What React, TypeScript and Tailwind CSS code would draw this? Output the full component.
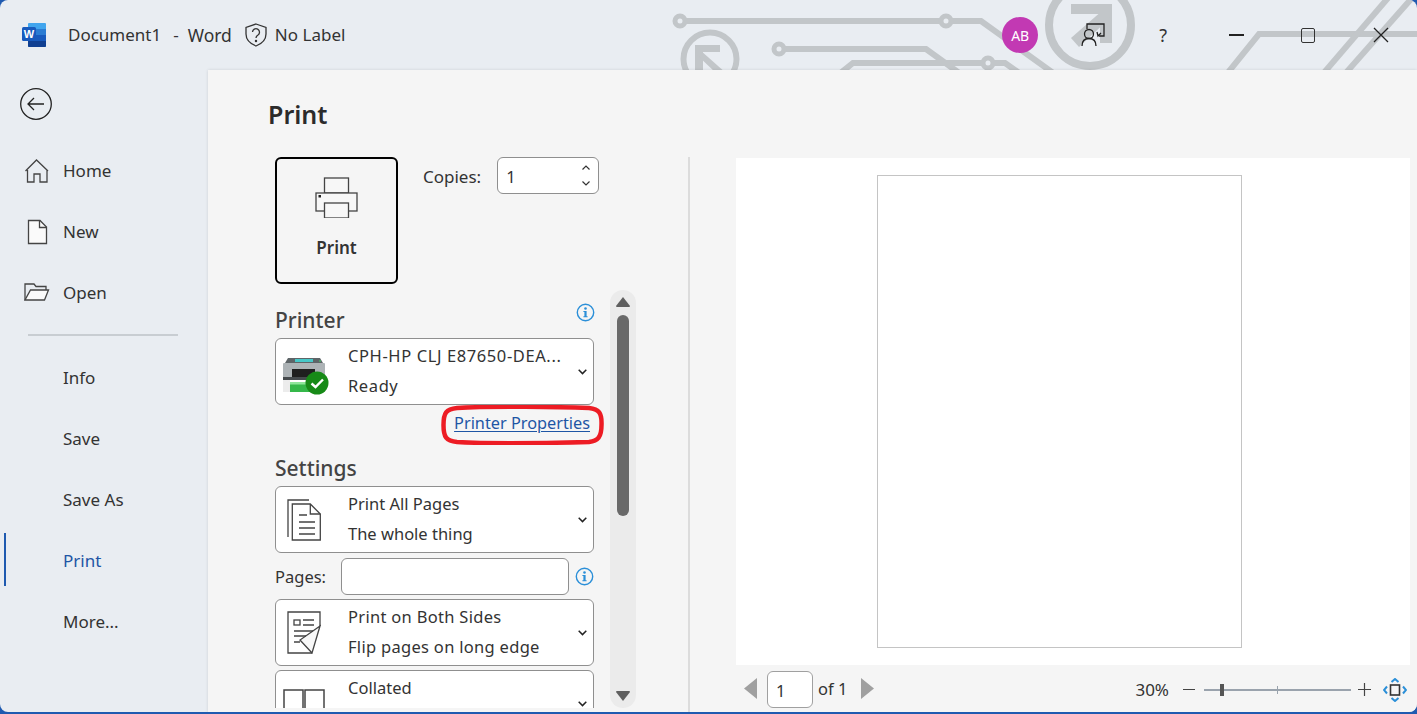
import type { ReactNode } from "react";

function Circuit() {
  return (
    <svg className="absolute left-0 top-0" width="1417" height="71" fill="none" stroke="#c2c6c9" strokeWidth="6">
      <path d="M680 21H981L1056 75" />
      <path d="M779 49H926L962 75" />
      <path d="M838 75L853 63H1005L1022 75" />
      <path d="M1226 75L1259 34H1417" />
      <path d="M1322 75L1388 -2" />
      <path d="M1344 75L1412 -2" />
      <circle cx="1090" cy="25" r="41" strokeWidth="8" />
      <path d="M1071 4H1112V43H1100V14H1071Z" fill="#c2c6c9" stroke="none" />
      <path d="M1103 10L1110 18L1079 47L1071 38Z" fill="#c2c6c9" stroke="none" />
      <circle cx="710" cy="59" r="26.5" />
      <path d="M695 45H720V52H703V70H695Z" fill="#c2c6c9" stroke="none" />
      <path d="M700 50L726 73H716L696 54Z" fill="#c2c6c9" stroke="none" />
      <g fill="#e9edf2" strokeWidth="5">
        <circle cx="680" cy="21" r="5" />
        <circle cx="946" cy="21" r="5" />
        <circle cx="779" cy="49" r="5" />
        <circle cx="988" cy="63" r="5" />
      </g>
    </svg>
  );
}

function WordLogo() {
  return (
    <svg width="24" height="24" viewBox="0 0 24 24">
      <rect x="6" width="18" height="24" rx="1" fill="#41a5ee" />
      <rect x="6" y="6" width="18" height="6" fill="#2b7cd3" />
      <rect x="6" y="12" width="18" height="6" fill="#185abd" />
      <path d="M6 18H24V23a1 1 0 0 1-1 1H7a1 1 0 0 1-1-1Z" fill="#103f91" />
      <rect y="4" width="14" height="14" rx="1.5" fill="#185abd" />
      <text x="7" y="15" textAnchor="middle" fontSize="11" fontWeight="700" fill="#fff" fontFamily="Liberation Sans">W</text>
    </svg>
  );
}

function Chevron() {
  return (
    <svg width="9" height="6" viewBox="0 0 9 6" fill="none" stroke="#222" strokeWidth="1.5">
      <path d="M.7.8L4.5 4.6 8.3.8" />
    </svg>
  );
}

function InfoIcon() {
  return (
    <svg width="19" height="19" viewBox="0 0 19 19">
      <circle cx="9.5" cy="9.5" r="8.2" fill="none" stroke="#2b8fd8" strokeWidth="1.4" />
      <rect x="8.4" y="8" width="2.2" height="6" fill="#2b8fd8" />
      <path d="M7.4 8H9v1H7.4ZM7.4 13.2h4.2v1H7.4Z" fill="#2b8fd8" />
      <circle cx="9.5" cy="5.5" r="1.3" fill="#2b8fd8" />
    </svg>
  );
}

function PrinterColor() {
  return (
    <svg className="ml-[4px] mt-[9px]" width="46" height="38" viewBox="0 0 46 38">
      <path d="M2 6L5 1H37L40 6Z" fill="#5e6568" />
      <rect x="12" y="2" width="18" height="3" fill="#47c8c8" />
      <circle cx="37" cy="4" r="0.8" fill="#3ee06a" />
      <rect y="6" width="42" height="15" rx="1" fill="#adb3b6" />
      <rect x="9" y="12" width="23" height="8" fill="#1f1f1f" />
      <rect y="20" width="42" height="3" fill="#454a4d" />
      <rect y="23" width="7" height="12" fill="#ececec" />
      <rect x="7" y="25" width="21" height="10" fill="#35b84a" />
      <rect x="7" y="25" width="21" height="2.5" fill="#8fe69b" />
      <circle cx="34" cy="26" r="11.5" fill="#178a17" />
      <path d="M28.5 26.5L32.5 30 40 22.5" fill="none" stroke="#fff" strokeWidth="2.4" />
    </svg>
  );
}

function PagesIcon() {
  return (
    <svg width="34" height="42" viewBox="0 0 34 42" fill="none" stroke="#444" strokeWidth="1.3">
      <path d="M1 38V1H22" />
      <path d="M6 5H24L34 15V41H6Z" transform="translate(-.7 0)" />
      <path d="M23.3 5V15H33.3" />
      <path d="M12 16H20M12 23H28M12 29H28M12 35H28" />
    </svg>
  );
}

function BothSidesIcon() {
  return (
    <svg width="34" height="43" viewBox="0 0 34 43" fill="none" stroke="#444" strokeWidth="1.3">
      <path d="M33 15V1H1V42H25" />
      <path d="M33 15L13 29 25 42Z" fill="#f8f8f8" />
      <rect x="7" y="9" width="6" height="5" />
      <path d="M16 9H27M16 14H27M7 20H26M7 25H19M7 31H13" />
    </svg>
  );
}

function CollatedIcon() {
  return (
    <svg width="42" height="30" viewBox="0 0 42 30" fill="#fff" stroke="#444" strokeWidth="1.5">
      <rect x="1" y="1" width="19" height="28" />
      <rect x="22" y="1" width="19" height="28" />
    </svg>
  );
}

function NavIcon({ name }: { name: string }) {
  if (name === "Home") {
    return (
      <svg width="26" height="26" viewBox="0 0 26 26" fill="none" stroke="#444" strokeWidth="1.3">
        <path d="M1.5 13L12.5 2 24 13M3.5 12V24H10V16H16V24H23V12" />
      </svg>
    );
  }
  if (name === "New") {
    return (
      <svg width="26" height="26" viewBox="0 0 26 26" fill="#fafafa" stroke="#444" strokeWidth="1.3">
        <path d="M4.5 1.5H16L22.5 8V24.5H4.5Z" />
        <path d="M15.5 1.5V8.5H22.5" fill="none" />
      </svg>
    );
  }
  if (name === "Open") {
    return (
      <svg width="26" height="26" viewBox="0 0 26 26" fill="none" stroke="#444" strokeWidth="1.3">
        <path d="M1 20V4H10L12 6.5H22V10" />
        <path d="M1 20H20.5L24.5 10H6.5Z" fill="#fafafa" />
      </svg>
    );
  }
  return <span className="block w-[26px]" />;
}

function NavItem({ name, active }: { name: string; active?: boolean }) {
  return (
    <div className="relative flex h-[61px] items-center gap-[14px] pl-[24px] text-[17px]">
      {active && <div className="absolute left-[4px] top-[3px] h-[53px] w-[2px] bg-[#1f5ab0]" />}
      <span className="w-[25px] shrink-0">
        <NavIcon name={name} />
      </span>
      <span className={active ? "text-[#1e55a5]" : ""}>{name}</span>
    </div>
  );
}

function Dropdown({ icon, line1, line2, track }: { icon: ReactNode; line1: string; line2?: string; track?: string }) {
  return (
    <div className="flex h-[67px] w-[319px] shrink-0 items-center rounded-[6px] border border-[#8f8f8f] bg-white">
      <div className="flex w-[72px] shrink-0 pr-[16px]">
        <div className="flex w-[56px] justify-center">{icon}</div>
      </div>
      <div className={`flex-1 pb-[1px] leading-[30.5px] ${track ?? ""}`}>
        <div>{line1}</div>
        <div>{line2 ?? "\u00a0"}</div>
      </div>
      <div className="pr-[6px]">
        <Chevron />
      </div>
    </div>
  );
}

export default function App() {
  return (
    <div className="h-[714px] w-[1417px] overflow-hidden bg-[#1f5ab0] font-['Noto_Sans',sans-serif] text-[16.5px] text-[#333]">
      <div className="relative flex h-[712px] flex-col overflow-hidden rounded-[8px] bg-[#e9edf2]">
        <Circuit />
        <header className="relative flex h-[70px] shrink-0 items-center pl-[22px] text-[17px]">
          <WordLogo />
          <span className="ml-[22px]">Document1</span>
          <span className="ml-[12px]">-</span>
          <span className="ml-[9px] text-[17.5px]">Word</span>
          <svg className="ml-[13px]" width="22" height="24" viewBox="0 0 22 24" fill="none" stroke="#333" strokeWidth="1.3">
            <path d="M11 1L21 4.5V11C21 17 16 21 11 23 6 21 1 17 1 11V4.5Z" />
            <path d="M7.5 9a3.5 3.5 0 1 1 5.5 3c-1.3.8-2 1.5-2 3" />
            <circle cx="11" cy="18" r=".6" />
          </svg>
          <span className="ml-[8px]">No Label</span>
          <div className="flex-1" />
          <div className="flex h-[36px] w-[36px] items-center justify-center rounded-full bg-[#c239b3] text-[14px] text-white">AB</div>
          <svg className="ml-[43px]" width="24" height="24" viewBox="0 0 24 24" fill="none" stroke="#222" strokeWidth="1.3">
            <path d="M6 6V1H23V13H18" />
            <circle cx="8" cy="11" r="4.5" />
            <path d="M1 23C1 18 4 15.5 8 15.5S15 18 15 23" />
            <path d="M16 9L17 13 20 10" />
          </svg>
          <span className="ml-[54px] text-[18px]">?</span>
          <div className="ml-[62px] h-[1.5px] w-[15px] bg-[#222]" />
          <div className="ml-[57px] h-[15px] w-[14px] rounded-[2px] border-[1.5px] border-[#333]" />
          <svg className="ml-[58px] mr-[28px]" width="16" height="16" viewBox="0 0 16 16" stroke="#222" strokeWidth="1.3">
            <path d="M1 1L15 15M15 1L1 15" />
          </svg>
        </header>

        <div className="relative flex min-h-0 flex-1">
          <nav className="w-[208px] shrink-0">
            <div className="flex h-[70px] items-center pb-[2px] pl-[20px]">
              <svg width="32" height="32" viewBox="0 0 32 32" fill="none" stroke="#222" strokeWidth="1.3">
                <circle cx="16" cy="16" r="15.3" />
                <path d="M24 16H8M14 10L8 16 14 22" />
              </svg>
            </div>
            <NavItem name="Home" />
            <NavItem name="New" />
            <NavItem name="Open" />
            <div className="mx-[28px] my-[11px] h-[2px] w-[150px] bg-[#c8cdd2]" />
            <NavItem name="Info" />
            <NavItem name="Save" />
            <NavItem name="Save As" />
            <NavItem name="Print" active />
            <NavItem name="More..." />
          </nav>

          <main className="flex min-w-0 flex-1 flex-col bg-[#f5f5f5] shadow-[0_0_3px_rgba(0,0,0,0.12)]">
            <div className="flex h-[87px] shrink-0 items-start pl-[60px] pt-[25px]">
              <h1 className="text-[25px] font-semibold leading-[39px] text-[#2b2b2b]">Print</h1>
            </div>
            <div className="flex min-h-0 flex-1">
              <div className="w-[482px] shrink-0 border-r-2 border-[#dcdcdc] pl-[67px]">
                <div className="flex h-[127px] items-start">
                  <button className="flex h-[127px] w-[123px] flex-col items-center rounded-[6px] border-2 border-black pt-[18px]">
                    <svg width="43" height="41" viewBox="0 0 43 41" fill="#f7f7f7" stroke="#444" strokeWidth="1.3">
                      <rect x="9.5" y="1" width="24" height="15" />
                      <rect x="1" y="16" width="41" height="18" />
                      <rect x="9.5" y="26" width="24" height="15" />
                      <rect x="3.5" y="18" width="2.5" height="2.5" fill="#222" stroke="none" />
                    </svg>
                    <span className="mt-[17px] text-[17px] font-semibold">Print</span>
                  </button>
                  <span className="ml-[25px] mt-[7px] text-[17px]">Copies:</span>
                  <div className="ml-[16px] flex h-[37px] w-[102px] items-center justify-between rounded-[6px] border border-[#8f8f8f] bg-white pl-[8px] pr-[8px]">
                    <span className="mt-[3px]">1</span>
                    <div className="flex flex-col gap-[11px]">
                      <svg width="8" height="5" viewBox="0 0 8 5" fill="none" stroke="#333" strokeWidth="1.2">
                        <path d="M.5 4.5L4 1 7.5 4.5" />
                      </svg>
                      <svg width="8" height="5" viewBox="0 0 8 5" fill="none" stroke="#333" strokeWidth="1.2">
                        <path d="M.5.5L4 4 7.5.5" />
                      </svg>
                    </div>
                  </div>
                </div>

                <div className="mt-[6px] flex h-[418px]">
                  <div className="h-full w-[335px] shrink-0 overflow-hidden">
                    <div className="relative flex h-[48px] w-[319px] items-end pb-[3px]">
                      <h2 className="text-[21px] font-medium leading-[30px] text-[#444]">Printer</h2>
                      <div className="absolute -right-px top-[13px]">
                        <InfoIcon />
                      </div>
                    </div>
                    <Dropdown icon={<PrinterColor />} line1="CPH-HP CLJ E87650-DEA..." line2="Ready" track="tracking-[0.6px]" />
                    <div className="flex h-[36px] w-[319px] items-center justify-end pr-[4px]">
                      <div className="relative">
                        <a className="text-[16.3px] text-[#1e55a5] underline underline-offset-2">Printer Properties</a>
                        <svg className="absolute -left-[13px] -top-[6px]" width="163" height="40" viewBox="0 0 163 40" fill="none" stroke="#ed1c24" strokeWidth="4.5">
                          <path d="M16 3C50 1 120 2 148 3 158 4 161 8 160.500 20 160.500 32 157 36 148 37 110 38 50 39 16 37 5 36 2.500 32 2.500 20 2.500 8 5 4 16 3Z" />
                        </svg>
                      </div>
                    </div>
                    <div className="flex h-[45px] items-end">
                      <h2 className="text-[21px] font-medium leading-[36px] text-[#444]">Settings</h2>
                    </div>
                    <Dropdown icon={<PagesIcon />} line1="Print All Pages" line2="The whole thing" />
                    <div className="mt-[5px] flex h-[37px] w-[319px] items-center">
                      <span className="mt-[1px] w-[66px]">Pages:</span>
                      <div className="h-[37px] w-[230px] rounded-[6px] border border-[#8f8f8f] bg-white" />
                      <div className="ml-[6px]">
                        <InfoIcon />
                      </div>
                    </div>
                    <div className="mt-[4px]">
                      <Dropdown icon={<BothSidesIcon />} line1="Print on Both Sides" line2="Flip pages on long edge" track="tracking-[0.3px]" />
                    </div>
                    <div className="mt-[4px]">
                      <Dropdown icon={<CollatedIcon />} line1="Collated" />
                    </div>
                  </div>
                  <div className="flex h-full w-[26px] flex-col items-center rounded-[13px] bg-[#ebebeb] pt-[7px]">
                    <svg width="14" height="10" viewBox="0 0 14 10" fill="#5f5f5f">
                      <path d="M7 0L14 9a1 1 0 0 1-1 1H1a1 1 0 0 1-1-1Z" />
                    </svg>
                    <div className="mt-[8px] h-[201px] w-[12px] rounded-[6px] bg-[#696969]" />
                    <div className="flex-1" />
                    <svg className="mb-[7px]" width="14" height="10" viewBox="0 0 14 10" fill="#5f5f5f">
                      <path d="M7 10L14 1a1 1 0 0 0-1-1H1a1 1 0 0 0-1 1Z" />
                    </svg>
                  </div>
                </div>
              </div>

              <div className="flex min-w-0 flex-1 flex-col pl-[46px] pr-[7px] pt-[1px]">
                <div className="flex h-[507px] shrink-0 justify-center bg-white pr-[27px] pt-[17px]">
                  <div className="h-[473px] w-[365px] border border-[#c4c4c4]" />
                </div>
                <div className="flex h-[47px] items-center pl-[8px] pr-[3px] pt-[2px]">
                  <svg className="-mt-[2px]" width="13" height="21" viewBox="0 0 13 21" fill="#a0a0a0">
                    <path d="M13 0V21L0 10.5Z" />
                  </svg>
                  <div className="ml-[10px] flex h-[37px] w-[46px] items-center rounded-[6px] border border-[#a0a0a0] bg-white pl-[8px]">
                    <span className="mt-[3px]">1</span>
                  </div>
                  <span className="ml-[5px]">of 1</span>
                  <svg className="-mt-[2px] ml-[14px]" width="13" height="21" viewBox="0 0 13 21" fill="#a0a0a0">
                    <path d="M0 0V21L13 10.5Z" />
                  </svg>
                  <div className="flex-1" />
                  <span className="text-[17px]">30%</span>
                  <div className="ml-[14px] h-[1.5px] w-[12px] bg-[#444]" />
                  <div className="relative ml-[9px] h-[2px] w-[147px] bg-[#9aa3ad]">
                    <div className="absolute left-[16px] top-[-5px] h-[12px] w-[4px] bg-[#555]" />
                    <div className="absolute left-[73px] top-[-3px] h-[8px] w-[1px] bg-[#9aa3ad]" />
                  </div>
                  <svg className="ml-[7px]" width="13" height="13" viewBox="0 0 13 13" stroke="#444" strokeWidth="1.2">
                    <path d="M0 6.5H13M6.5 0V13" />
                  </svg>
                  <svg className="ml-[12px]" width="24" height="24" viewBox="0 0 24 24" fill="none" stroke="#2b8fd8" strokeWidth="2">
                    <path d="M8.5 4L12 1 15.5 4M8.5 20L12 23 15.5 20M4 8.5L1 12 4 15.5M20 8.5L23 12 20 15.5" />
                    <rect x="7.5" y="7" width="9" height="10" stroke="#333" strokeWidth="1.6" />
                  </svg>
                </div>
              </div>
            </div>
          </main>
        </div>
      </div>
    </div>
  );
}
